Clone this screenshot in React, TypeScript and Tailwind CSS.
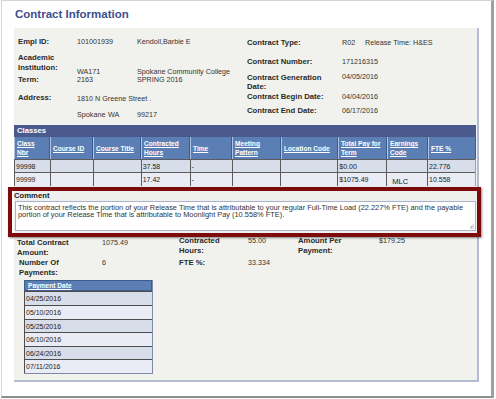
import React from "react";

const L = "font-bold text-[7.7px] leading-[10px] text-[#2a2a2a]";
const V = "text-[7.2px] leading-[10px] text-[#333] whitespace-nowrap";

const cols: { w: string; h: string[] }[] = [
  { w: "w-[36px]", h: ["Class", "Nbr"] },
  { w: "w-[43px]", h: ["Course ID"] },
  { w: "w-[48px]", h: ["Course Title"] },
  { w: "w-[49px]", h: ["Contracted", "Hours"] },
  { w: "w-[42px]", h: ["Time"] },
  { w: "w-[49px]", h: ["Meeting", "Pattern"] },
  { w: "w-[57px]", h: ["Location Code"] },
  { w: "w-[49px]", h: ["Total Pay for", "Term"] },
  { w: "w-[41px]", h: ["Earnings", "Code"] },
  { w: "w-[48px]", h: ["FTE %"] },
];

const rows = [
  { bg: "bg-[#d8dee9]", h: "h-[13px]", v: ["99998", "", "", "37.58", "-", "", "", "$0.00", "", "22.776"] },
  { bg: "bg-[#e9ecf4]", h: "h-[14px]", v: ["99999", "", "", "17.42", "-", "", "", "$1075.49", "MLC", "10.558"] },
];

const payDates = ["04/25/2016", "05/10/2016", "05/25/2016", "06/10/2016", "06/24/2016", "07/11/2016"];
const payH = ["h-[14px]", "h-[14px]", "h-[13px]", "h-[14px]", "h-[13px]", "h-[14px]"];

export default function App() {
  return (
    <div className="w-[496px] h-[399px] bg-white font-['Liberation_Sans',Arial,sans-serif]">
      <div className="ml-[1px] w-[493px] h-[398px] bg-white border-l border-t border-[#d4d4d4] border-r-[3px] border-r-[#a0a0a0] border-b-[2px] border-b-[#8e8e8e] pl-[12px] pt-[6px]">
        <div className="pl-[1px] text-[11.5px] leading-[14px] font-bold text-[#3e4f8f]">Contract Information</div>
        <div className="mt-[7px] w-[465px] h-[354px] bg-[#f1f2ed] border-r-2 border-b-2 border-[#b4bcd4]">
          {/* top info */}
          <div className="flex pt-[9px]">
            <div className="w-[233px] pl-[4px] flex flex-col">
              <div className="flex h-[15px]">
                <div className={`${L} w-[59px]`}>Empl ID:</div>
                <div className={`${V} w-[60px]`}>101001939</div>
                <div className={V}>Kendoll,Barbie E</div>
              </div>
              <div className="flex h-[22px]">
                <div className={`${L} w-[59px] pt-[1px]`}>Academic<br />Institution:</div>
                <div className={`${V} w-[60px] pt-[15px]`}>WA171</div>
                <div className={`${V} pt-[15px]`}>Spokane Community College</div>
              </div>
              <div className="flex h-[19px]">
                <div className={`${L} w-[59px] pt-[1px]`}>Term:</div>
                <div className={`${V} w-[60px] pt-[1px]`}>2163</div>
                <div className={`${V} pt-[1px]`}>SPRING 2016</div>
              </div>
              <div className="flex h-[17px]">
                <div className={`${L} w-[59px]`}>Address:</div>
                <div className={`${V} pt-[1px]`}>1810 N Greene Street .</div>
              </div>
              <div className="flex h-[10px]">
                <div className="w-[59px] shrink-0" />
                <div className={`${V} w-[31px] shrink-0`}>Spokane</div>
                <div className={`${V} w-[29px] shrink-0`}>WA</div>
                <div className={V}>99217</div>
              </div>
            </div>
            <div className="flex-1 flex flex-col pt-[1px]">
              <div className="flex h-[19px]">
                <div className={`${L} w-[95px]`}>Contract Type:</div>
                <div className={`${V} w-[23px]`}>R02</div>
                <div className={V}>Release Time: H&amp;ES</div>
              </div>
              <div className="flex h-[15px]">
                <div className={`${L} w-[95px]`}>Contract Number:</div>
                <div className={V}>171216315</div>
              </div>
              <div className="flex h-[20px]">
                <div className={`font-bold text-[7.7px] leading-[9px] text-[#2a2a2a] w-[95px] pt-[0.5px]`}>Contract Generation<br />Date:</div>
                <div className={V}>04/05/2016</div>
              </div>
              <div className="flex h-[14px]">
                <div className={`${L} w-[95px]`}>Contract Begin Date:</div>
                <div className={V}>04/04/2016</div>
              </div>
              <div className="flex h-[10px]">
                <div className={`${L} w-[95px]`}>Contract End Date:</div>
                <div className={V}>06/17/2016</div>
              </div>
            </div>
          </div>

          {/* classes */}
          <div className="mt-[5px] w-[462px]">
            <div className="h-[12px] bg-[#4b5a8d] pl-[3px] text-white font-bold text-[7.7px] leading-[12px]">Classes</div>
            <div className="flex h-[22px] bg-[#5b7fb4]">
              {cols.map((c, i) => (
                <div key={i} className={`${c.w} flex items-center pl-[2px] border-l border-l-[#b2c4e0] border-r border-r-[#3e5b8c]`}>
                  <div className="text-white font-bold text-[6.6px] leading-[9px] underline">
                    {c.h.map((t, j) => (
                      <div key={j}>{t}</div>
                    ))}
                  </div>
                </div>
              ))}
            </div>
            {rows.map((r, ri) => (
              <div key={ri} className={`flex ${r.h} ${r.bg} border-r border-[#9aa2b8]`}>
                {cols.map((c, i) => (
                  <div
                    key={i}
                    className={`${c.w} border-l border-t border-[#5c5c5c] flex items-center ${r.v[i] === "MLC" ? "pl-[5px] pt-[4px] text-[7.6px]" : "pl-[1px] text-[7px]"} text-[#222] leading-[9px]`}
                  >
                    {r.v[i]}
                  </div>
                ))}
              </div>
            ))}
          </div>

          {/* comment */}
          <div className="relative mt-[1px] h-[50px] w-[463px] bg-[#efefed] pt-[4px]">
            <div className="font-bold text-[7.7px] leading-[9px] text-[#222]">Comment</div>
            <div className="relative mt-[1px] ml-[1px] w-[461px] h-[30px] bg-white border border-[#aab2cc] pl-[2px] pt-[2px] text-[7.4px] leading-[7px] text-[#333]">
              This contract reflects the portion of your Release Time that is attributable to your regular Full-Time Load (22.227% FTE) and the payable portion of your Release Time that is attributable to Moonlight Pay (10.558% FTE).
              <svg className="absolute right-[1px] bottom-[1px]" width="5" height="5" viewBox="0 0 5 5">
                <rect x="3.5" y="0.5" width="1" height="1" fill="#9a9a9a" />
                <rect x="2" y="2" width="1" height="1" fill="#9a9a9a" />
                <rect x="3.5" y="2" width="1" height="1" fill="#9a9a9a" />
                <rect x="0.5" y="3.5" width="1" height="1" fill="#9a9a9a" />
                <rect x="2" y="3.5" width="1" height="1" fill="#9a9a9a" />
                <rect x="3.5" y="3.5" width="1" height="1" fill="#9a9a9a" />
              </svg>
            </div>
            <div className="absolute -left-[6px] -right-[4px] top-0 bottom-0 border-[4px] border-[#7d0b0b] shadow-[1px_1px_2px_rgba(0,0,0,0.45)] pointer-events-none" />
          </div>

          {/* totals */}
          <div className="flex h-[20px] pl-[3px]">
            <div className={`${L} w-[85px] pt-[1px]`}>Total Contract<br />Amount:</div>
            <div className={`${V} w-[77px] pt-[1px]`}>1075.49</div>
            <div className={`${L} w-[69px] -mt-[1px]`}>Contracted<br />Hours:</div>
            <div className={`${V} w-[50px] -mt-[1px]`}>55.00</div>
            <div className={`${L} w-[81px] -mt-[1px]`}>Amount Per<br />Payment:</div>
            <div className={`${V} -mt-[1px]`}>$179.25</div>
          </div>
          <div className="flex h-[20px] pl-[5px]">
            <div className={`${L} w-[83px] pt-[1px]`}>Number Of<br />Payments:</div>
            <div className={`${V} w-[77px] pt-[1px]`}>6</div>
            <div className={`${L} w-[69px] pt-[1px]`}>FTE %:</div>
            <div className={`${V} pt-[1px]`}>33.334</div>
          </div>

          {/* payment table */}
          <div className="mt-[3px] ml-[10px] w-[129px] border-r border-b border-[#7e89aa]">
            <div className="h-[11px] bg-[#5b7fb4] pl-[3px] border border-[#3e5b8c] text-white font-bold text-[6.6px] leading-[9px] underline">Payment Date</div>
            {payDates.map((d, i) => (
              <div
                key={i}
                className={`${payH[i]} ${i % 2 === 0 ? "bg-[#d7dde9]" : "bg-[#e9ecf5]"} border-l border-t border-[#4e4e4e] pl-[1px] flex items-center text-[7px] leading-[9px] text-[#222]`}
              >
                {d}
              </div>
            ))}
          </div>
        </div>
      </div>
    </div>
  );
}
